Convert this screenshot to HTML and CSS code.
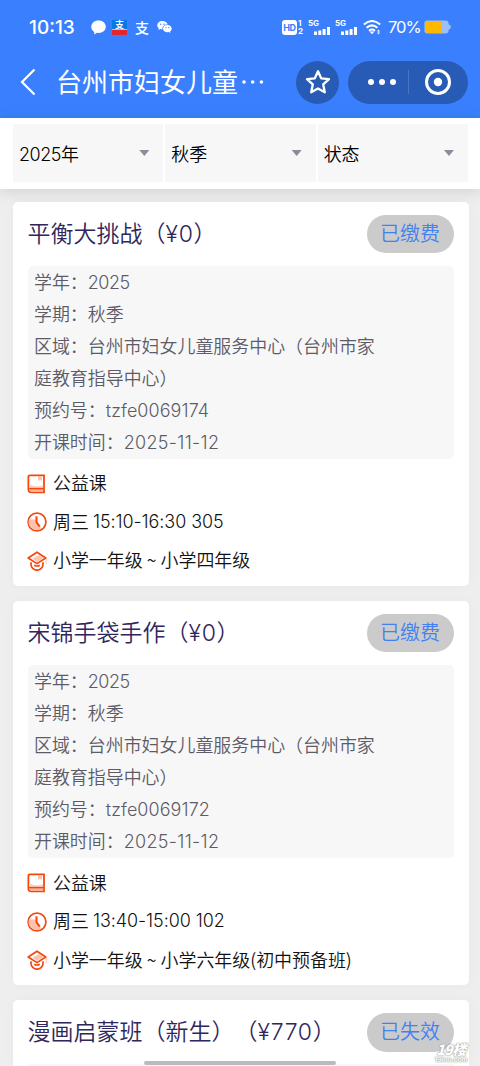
FILE: index.html
```html
<!DOCTYPE html>
<html lang="zh-CN">
<head>
<meta charset="utf-8">
<title>台州市妇女儿童服务中心</title>
<link rel="stylesheet" href="styles.css">
</head>
<body>
<svg class="defs" width="0" height="0" aria-hidden="true">
  <symbol id="book" viewBox="0 0 20 20">
    <path d="M3 1.300h14v17H4.200Q1.400 18.300 1.400 15.800V3Q1.400 1.300 3 1.300z" fill="#fff" stroke="#f4480f" stroke-width="1.800"/>
    <path d="M2.300 10Q8 14 16.100 11v3H2.300z" fill="#ffd0c0"/><path d="M11 2v5l2-1.300L15 7V2z" fill="#ffc2ad"/>
    <path d="M2.300 15h13.800v2.400H3.500z" fill="#ffb69d"/><path d="M1.500 14.600h15.400" stroke="#f4480f" stroke-width="1.500"/>
  </symbol>
  <symbol id="clock" viewBox="0 0 20 20">
    <circle cx="10" cy="10" r="8.900" fill="#fff" stroke="#f4480f" stroke-width="1.700"/>
    <path d="M2 7.500h7l5 8.800A7.800 7.800 0 0 1 2 7.500z" fill="#ffc3ad"/>
    <path d="M9.500 4.200v6.200l3.300 4.300" fill="none" stroke="#f4480f" stroke-width="2"/>
  </symbol>
  <symbol id="cap" viewBox="0 0 20 20">
    <path d="M10 1.200 18.800 7 10 12.600 1.200 7z" fill="#fff" stroke="#f4480f" stroke-width="1.700" stroke-linejoin="round"/>
    <path d="M5.500 7.500 12 4l4.500 3L10 11z" fill="#ffc3ad"/>
    <path d="M4 11.200v2a6 6 0 0 0 12 0v-2M7.200 14.200Q10 15.800 12.800 14.200" fill="none" stroke="#f4480f" stroke-width="1.700"/>
    <path d="M19.200 8v5" stroke="#ffc2ad" stroke-width="1"/>
  </symbol>
  <symbol id="bars" viewBox="0 0 17 8"><path d="M0 4.500h3V8H0zM4.300 3.400h3V8h-3zM8.600 2h3v6h-3zM13 0h3v8h-3z" fill="#fff"/></symbol>
</svg>

<header class="top">
  <div class="status">
    <span class="time">10:13</span>
    <svg class="bubble" viewBox="0 0 15 15"><path d="M7.500.5C3.300.5.3 3.200.3 6.800c0 2.300 1.200 4.200 3 5.200L3 14.500l3-1.700c5 .7 8.800-2 8.800-6C14.800 3.200 11.700.5 7.500.5z" fill="#fff"/></svg>
    <span class="pay-app">支</span>
    <span class="pay">支</span>
    <svg class="wechat" viewBox="0 0 15 12"><path d="M5.500 0C2.300 0 .3 2 .3 4.300c0 1.300.6 2.300 1.500 3.100L1.500 9l1.900-.9c.6.2 1.200.3 2 .3-.5-3 2-5 5.300-5C10 1.400 8 0 5.500 0z" fill="#fff"/><path d="M10.400 4C7.800 4 6 5.600 6 7.700s1.900 3.600 4.400 3.600l1.300-.2 1.600.8-.3-1.400c1-.7 1.700-1.700 1.700-2.800C14.700 5.600 12.800 4 10.400 4z" fill="#fff"/><g fill="#3a80fe"><circle cx="3.800" cy="3.200" r=".7"/><circle cx="7" cy="3.200" r=".7"/><circle cx="9" cy="6.700" r=".6"/><circle cx="11.800" cy="6.700" r=".6"/></g></svg>
    <span class="hd">HD</span>
    <span class="sims"><span>1</span><span>2</span></span>
    <span class="net"><b>5G</b><svg viewBox="0 0 17 8"><use href="#bars"/></svg></span>
    <span class="net"><b>5G</b><svg viewBox="0 0 17 8"><use href="#bars"/></svg></span>
    <svg class="wifi" viewBox="0 0 18 15"><g fill="none" stroke="#fff" stroke-width="2"><path d="M.8 4.600Q9-2.600 17.200 4.600"/><path d="M3.600 7.800Q9 3 14.400 7.800"/><path d="M6 10.700q3-2.400 6 0"/></g><path d="M6.500 11.500h5L9 14.200z" fill="#fff"/><path d="M14 11.500l1.500-2 1.500 2zM14 12.500l1.500 2 1.500-2z" fill="#fff"/></svg>
    <span class="percent">70%</span>
    <svg class="battery" viewBox="0 0 27 14"><rect x=".4" y=".4" width="24.200" height="13.200" rx="3" fill="#9cbdf8"/><path d="M24 4q3 1 3 3t-3 3z" fill="#9cbdf8"/><path d="M3.400 1h14v12h-14Q1 13 1 10.600V3.400Q1 1 3.400 1z" fill="#ffb802"/></svg>
  </div>
  <div class="nav">
    <svg class="back" viewBox="0 0 16 28"><path d="M14.500 1.500 2 14l12.500 12.500" fill="none" stroke="#fff" stroke-width="2.200"/></svg>
    <h1>台州市妇女儿童</h1>
    <svg class="dots" viewBox="0 0 22 4"><g fill="#fff"><circle cx="2" cy="2" r="1.800"/><circle cx="10.700" cy="2" r="1.800"/><circle cx="19.400" cy="2" r="1.800"/></g></svg>
    <span class="star"><svg viewBox="0 0 26 26"><path d="M13 2.200 16.200 9.300 24 10.200 18.200 15.400 19.800 23.300 13 19.400 6.200 23.300 7.800 15.400 2 10.200 9.800 9.300z" fill="none" stroke="#fff" stroke-width="2.300" stroke-linejoin="round"/></svg></span>
    <span class="capsule">
      <svg class="more" viewBox="0 0 28 6"><g fill="#fff"><circle cx="3" cy="3" r="3"/><circle cx="14" cy="3" r="3"/><circle cx="25" cy="3" r="3"/></g></svg>
      <i class="divider"></i>
      <svg class="target" viewBox="0 0 26 26"><circle cx="13" cy="13" r="11.500" fill="none" stroke="#fff" stroke-width="3"/><circle cx="13" cy="13" r="4.200" fill="#fff"/></svg>
    </span>
  </div>
</header>

<div class="filters">
  <div class="filter"><span><span class="n">2025</span>年</span><i></i></div>
  <div class="filter"><span>秋季</span><i></i></div>
  <div class="filter"><span>状态</span><i></i></div>
</div>

<main class="list">
  <section class="card">
    <div class="head"><h2>平衡大挑战（<span class="n">¥0</span>）</h2><span class="badge">已缴费</span></div>
    <div class="info">
      <p>学年：<span class="n">2025</span></p>
      <p>学期：秋季</p>
      <p>区域：台州市妇女儿童服务中心（台州市家庭教育指导中心）</p>
      <p>预约号：<span class="n code">tzfe0069174</span></p>
      <p>开课时间：<span class="n date">2025-11-12</span></p>
    </div>
    <ul class="facts">
      <li><svg><use href="#book"/></svg><span>公益课</span></li>
      <li><svg><use href="#clock"/></svg><span>周三</span><span class="n slot">15:10-16:30 305</span></li>
      <li><svg><use href="#cap"/></svg><span>小学一年级 ~ 小学四年级</span></li>
    </ul>
  </section>
  <section class="card">
    <div class="head"><h2>宋锦手袋手作（<span class="n">¥0</span>）</h2><span class="badge">已缴费</span></div>
    <div class="info">
      <p>学年：<span class="n">2025</span></p>
      <p>学期：秋季</p>
      <p>区域：台州市妇女儿童服务中心（台州市家庭教育指导中心）</p>
      <p>预约号：<span class="n code">tzfe0069172</span></p>
      <p>开课时间：<span class="n date">2025-11-12</span></p>
    </div>
    <ul class="facts">
      <li><svg><use href="#book"/></svg><span>公益课</span></li>
      <li><svg><use href="#clock"/></svg><span>周三</span><span class="n slot">13:40-15:00 102</span></li>
      <li><svg><use href="#cap"/></svg><span>小学一年级 ~ 小学六年级(初中预备班)</span></li>
    </ul>
  </section>
  <section class="card last">
    <div class="head"><h2>漫画启蒙班（新生）（<span class="n">¥770</span>）</h2><span class="badge">已失效</span></div>
    <div class="info"></div>
  </section>
</main>
<div class="home-bar"></div>
<div class="watermark"><b>19楼</b><span>19lou.com</span></div>
</body>
</html>
```
FILE: styles.css
```css
* { box-sizing: border-box; margin: 0; padding: 0; }
html, body { height: 1066px; overflow: hidden; }
body {
  position: relative;
  display: flex;
  flex-direction: column;
  background: #eee;
  font-family: "Noto Sans CJK SC", sans-serif;
  font-weight: 350;
  font-size: 17.95px;
  text-spacing-trim: space-all;
  color: #111;
}
svg { display: block; flex: none; }
i { font-style: normal; }
.defs { position: absolute; }
.n { font-family: Inter, "Noto Sans CJK SC", sans-serif; font-weight: 350; line-height: 1; letter-spacing: -.45px; }
.code { letter-spacing: .1px; }
.date { letter-spacing: .35px; }

.top { flex: none; height: 118px; background: #3a80fe; color: #fff; }
.status { display: flex; align-items: center; height: 54px; padding-left: 29px; line-height: 1; }
.time { width: 62px; font: 500 19px/1 Inter, sans-serif; letter-spacing: 0; }
.bubble { width: 15px; height: 15px; }
.pay-app {
  width: 15px; height: 15px; margin-left: 6px; border-radius: 1px;
  background: linear-gradient(#0878e4 0 9px, #ffb24d 9px 10px, #e5242b 10px);
  font-size: 9px; line-height: 10px; font-weight: 700; text-align: center;
}
.pay { width: 15px; margin-left: 8px; font-size: 14px; line-height: 22px; font-weight: 500; }
.wechat { width: 15px; height: 12px; margin-left: 7px; }
.hd {
  width: 15px; height: 15px; margin-left: 110px; border-radius: 3px;
  background: #fff; color: #3a80fe; font: 700 9px/15px Inter, sans-serif; text-align: center; letter-spacing: -.4px;
}
.sims { width: 6px; margin-left: 1px; display: flex; flex-direction: column; font: 700 8px/8px Inter, sans-serif; }
.net { width: 23px; height: 15px; margin-left: 4px; display: flex; flex-direction: column; }
.net b { font: 700 8px/7px Inter, sans-serif; }
.net svg { width: 17px; height: 8px; margin-left: 6px; }
.wifi { width: 18px; height: 15px; margin-left: 5px; }
.percent { width: 32px; margin-left: 7px; font: 400 16.5px/1 Inter, sans-serif; letter-spacing: -1px; }
.battery { width: 27px; height: 14px; margin-left: 4px; }

.nav { display: flex; align-items: center; height: 56px; padding-left: 20px; }
.back { width: 16px; height: 28px; }
.nav h1 { margin-left: 20px; padding-bottom: 2px; font-weight: 400; font-size: 26px; line-height: 36px; white-space: nowrap; }
.dots { width: 22px; height: 4px; margin-left: 4px; }
.star {
  display: flex; align-items: center; justify-content: center;
  width: 43px; height: 43px; margin-left: 32px; border-radius: 50%; background: #285bb5;
}
.star svg { width: 26px; height: 26px; }
.capsule { display: flex; align-items: center; width: 120px; height: 43px; margin-left: 9px; padding-left: 19px; border-radius: 22px; background: #285bb5; }
.more { width: 30px; height: 6px; }
.divider { width: 1px; height: 24px; margin: 0 16px 0 11px; background: #4a75c4; }
.target { width: 26px; height: 26px; }

.filters {
  position: relative; flex: none;
  display: grid; grid-template-columns: repeat(3, 1fr); gap: 2px;
  height: 71px; padding: 6px 12px 7px 13px;
  background: #fff; box-shadow: 0 2px 14px rgba(0, 0, 0, .13);
}
.filter { display: flex; align-items: center; justify-content: space-between; padding: 0 14px 0 6px; background: #f7f7f7; color: #000; }
.filter span { padding-bottom: 1px; }
.filter i { width: 10px; height: 6px; background: #8e8c98; clip-path: polygon(0 0, 100% 0, 50% 100%); }

.list { flex: 1; min-height: 0; overflow: hidden; display: flex; flex-direction: column; gap: 15px; padding: 12.7px 11.5px 0 13px; }
.card { flex: none; height: 384.3px; padding: 13px 15px 0; border-radius: 5px; background: #fff; box-shadow: 0 0 12px rgba(0, 0, 0, .03); }
.head { display: flex; justify-content: space-between; height: 51px; }
.head h2 { margin-left: -.5px; font-weight: 350; font-size: 23px; line-height: 35px; color: #30265c; white-space: nowrap; }
.head .n { letter-spacing: .7px; }
.badge { width: 87px; height: 38.5px; border-radius: 20px; background: #cbcbcb; color: #4280f4; font-size: 20px; line-height: 36px; text-align: center; }
.info { height: 193px; padding: 0 70px 0 6px; border-radius: 5px; background: #f7f7f7; color: #5c5b67; line-height: 32px; }
.info p:first-child { margin-top: -1px; }
.info { display: flow-root; }
.facts { list-style: none; padding-top: 6px; }
.facts li { display: flex; align-items: center; height: 38.5px; white-space: pre; }
.facts span { padding-bottom: 3px; }
.facts svg { width: 20px; height: 20px; margin: 0 6px 0 -1px; }
.facts .slot { margin-left: 4px; padding-bottom: 1px; letter-spacing: -.05px; }
.last { flex: 1; height: auto; min-height: 0; overflow: hidden; border-radius: 5px 5px 0 0; }
.last .info { height: 2px; border-radius: 5px 5px 0 0; }

.home-bar { position: absolute; left: 144px; top: 1061px; width: 192px; height: 4px; border-radius: 2px; background: #bbb; }
.watermark {
  position: absolute; left: 434px; top: 1042px; width: 34px;
  display: flex; flex-direction: column; align-items: center;
  color: #fff; text-shadow: 0 0 1px #888, 0 0 2px #999;
}
.watermark b { font-size: 14px; line-height: 15px; font-weight: 900; font-style: italic; letter-spacing: -.5px; }
.watermark span { font: 700 6.5px/7px Inter, sans-serif; }
```
